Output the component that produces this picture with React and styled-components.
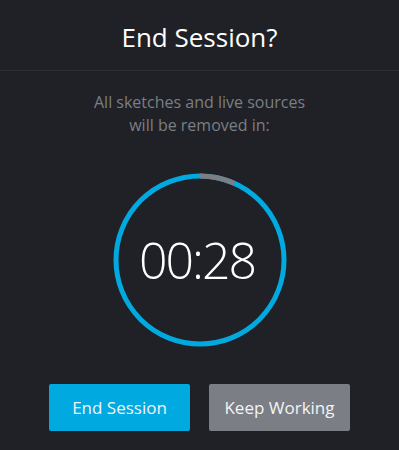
import React from 'react';
import styled, { createGlobalStyle } from 'styled-components';

const GlobalStyle = createGlobalStyle`
  html, body {
    margin: 0;
    padding: 0;
    background: #1f2126;
  }
  body {
    font-family: "Open Sans", "Noto Sans", sans-serif;
  }
`;

const Dialog = styled.div`
  width: 399px;
  height: 450px;
  background: #1f2126;
  display: flex;
  flex-direction: column;
  align-items: center;
  box-sizing: border-box;
`;

const Header = styled.div`
  width: 100%;
  height: 71px;
  border-bottom: 1px solid #2a2d32;
  display: flex;
  align-items: center;
  justify-content: center;
  box-sizing: border-box;
`;

const Title = styled.h1`
  margin: 0;
  padding-top: 4px;
  font-size: 26px;
  font-weight: 400;
  color: #ffffff;
`;

const Message = styled.p`
  margin: 20px 0 0;
  font-size: 16px;
  line-height: 23px;
  color: #7b7e84;
  text-align: center;
`;

const Timer = styled.div`
  position: relative;
  width: 174px;
  height: 174px;
  margin-top: 36px;
  display: flex;
  align-items: center;
  justify-content: center;
`;

const Ring = styled.svg`
  position: absolute;
  inset: 0;
`;

const Count = styled.span`
  margin-left: -5px;
  font-size: 50px;
  font-weight: 300;
  color: #ffffff;
  letter-spacing: -2px;
`;

const Actions = styled.div`
  display: flex;
  gap: 19px;
  margin-top: 37px;
`;

const Button = styled.button`
  width: 141px;
  height: 47px;
  border: none;
  border-radius: 2px;
  background: ${p => (p.$primary ? '#00a9e0' : '#7b7e84')};
  color: #f2f4f6;
  font-family: "Open Sans", "Noto Sans", sans-serif;
  font-size: 17px;
  cursor: pointer;
`;

const TOTAL = 30;
const REMAINING = 28;

export default function App() {
  const r = 84;
  const c = 2 * Math.PI * r;
  const elapsed = ((TOTAL - REMAINING) / TOTAL) * c;

  return (
    <>
      <GlobalStyle />
      <Dialog>
        <Header>
          <Title>End Session?</Title>
        </Header>
        <Message>
          All sketches and live sources
          <br />
          will be removed in:
        </Message>
        <Timer>
          <Ring width="174" height="174" viewBox="0 0 174 174">
            <circle cx="87" cy="87" r={r} fill="none" stroke="#00a9e0" strokeWidth="5" />
            <circle
              cx="87"
              cy="87"
              r={r}
              fill="none"
              stroke="#7b7e84"
              strokeWidth="5"
              strokeDasharray={`${elapsed} ${c}`}
              transform="rotate(-90 87 87)"
            />
          </Ring>
          <Count>00:{String(REMAINING).padStart(2, '0')}</Count>
        </Timer>
        <Actions>
          <Button $primary>End Session</Button>
          <Button>Keep Working</Button>
        </Actions>
      </Dialog>
    </>
  );
}
